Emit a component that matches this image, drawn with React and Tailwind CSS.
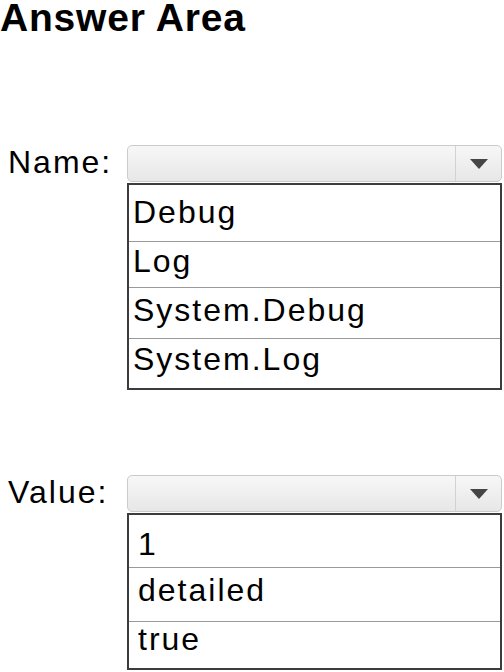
import { useState } from "react";

const nameRows = [
  { text: "Debug", h: "h-[57px]", pt: "pt-[11px]" },
  { text: "Log", h: "h-[46px]", pt: "pt-[3px]" },
  { text: "System.Debug", h: "h-[51px]", pt: "pt-[6px]" },
  { text: "System.Log", h: "h-[49px]", pt: "pt-[4px]" },
];

const valueRows = [
  { text: "1", h: "h-[53px]", pt: "pt-[13px]" },
  { text: "detailed", h: "h-[54px]", pt: "pt-[6px]" },
  { text: "true", h: "h-[46px]", pt: "pt-[1px]" },
];

function Dropdown({ rows, pad, onPick }) {
  return (
    <div className="w-[375px]">
      {/* closed select */}
      <div className="flex h-[37px] rounded-[5px] border border-[#cbcbcb] bg-gradient-to-b from-[#f7f7f7] to-[#e7e7e7]">
        <div className="flex-1" />
        <div className="flex w-[46px] items-center justify-center border-l border-[#d2d2d2]">
          <svg width="18" height="10" viewBox="0 0 18 10">
            <path d="M0 0 H18 L9 10 Z" fill="#454545" />
          </svg>
        </div>
      </div>
      {/* open list */}
      <div className="mt-px border-2 border-[#3c3c3c] bg-white">
        {rows.map((r, i) => (
          <div
            key={r.text}
            onClick={() => onPick && onPick(r.text)}
            className={`${r.h} ${r.pt} ${pad} text-[32px] leading-none tracking-[2px] text-black ${
              i < rows.length - 1 ? "border-b border-[#9a9a9a]" : ""
            }`}
          >
            {r.text}
          </div>
        ))}
      </div>
    </div>
  );
}

export default function App() {
  const [picked, setPicked] = useState({});

  return (
    <div className="h-[672px] w-[504px] overflow-hidden bg-white font-['Liberation_Sans',Arial,sans-serif] text-black">
      <h1 className="-mt-[2px] text-[39px] font-bold leading-[40px] tracking-[0.8px]">Answer Area</h1>

      {/* Name */}
      <div className="mt-[107px] flex">
        <div className="w-[127px] pl-[8px] text-[32px] leading-[35px] tracking-[2px]">Name:</div>
        <Dropdown rows={nameRows} pad="pl-[4px]" onPick={(v) => setPicked({ ...picked, name: v })} />
      </div>

      {/* Value */}
      <div className="mt-[85px] flex">
        <div className="w-[127px] pl-[8px] text-[32px] leading-[35px] tracking-[2px]">Value:</div>
        <Dropdown rows={valueRows} pad="pl-[9px]" onPick={(v) => setPicked({ ...picked, value: v })} />
      </div>
    </div>
  );
}
